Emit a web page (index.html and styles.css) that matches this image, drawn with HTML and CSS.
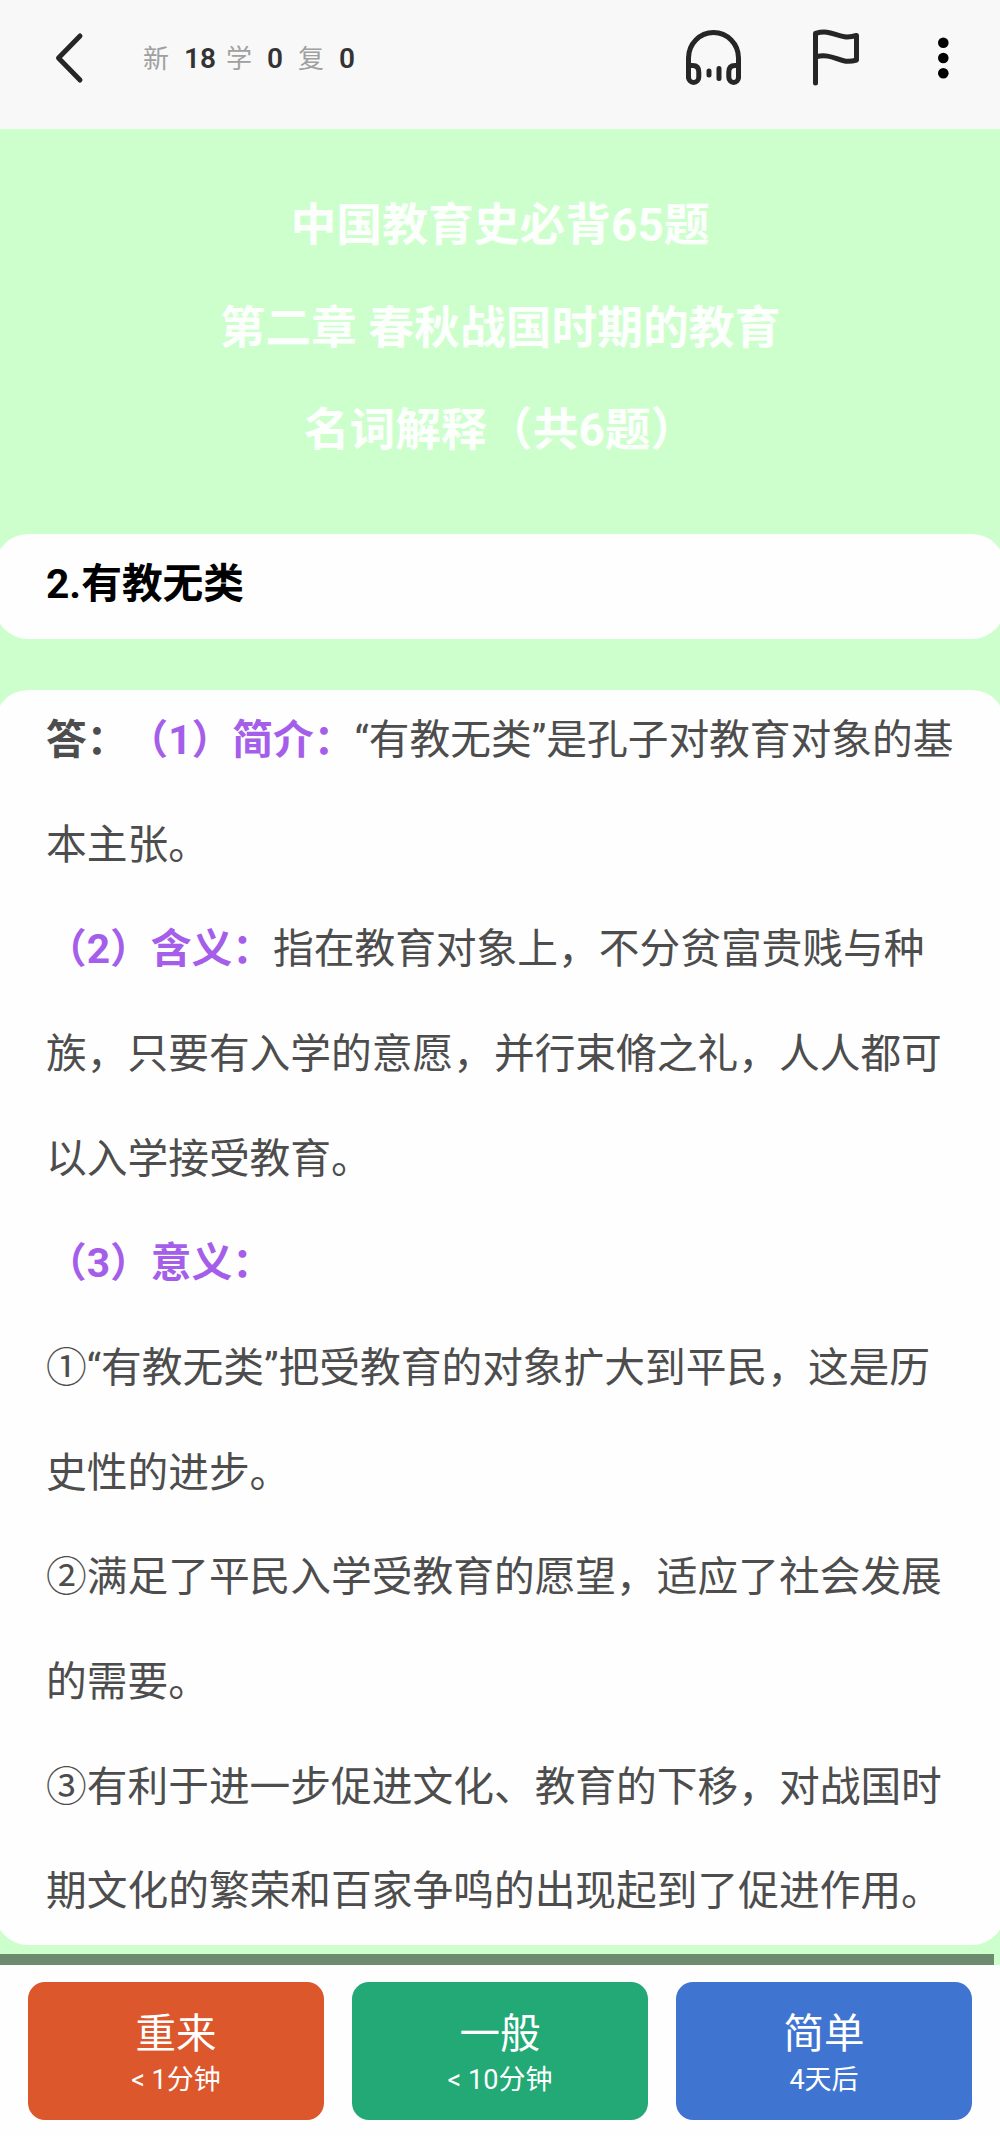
FILE: index.html
```
<!DOCTYPE html>
<html lang="zh-CN">
<head>
    <meta charset="UTF-8">
    <meta name="viewport" content="width=device-width, initial-scale=1.0">
    <title>中国教育史必背65题</title>
    <link rel="stylesheet" href="styles.css">
</head>
<body>
    <header class="topbar">
        <svg class="icon-back" width="32" height="56" viewBox="0 0 32 56">
            <path d="M26 6 L4.500 28 L26 50"/>
        </svg>
        <div class="counts">
            <span class="label">新</span><b>18</b>
            <span class="label">学</span><b>0</b>
            <span class="label">复</span><b>0</b>
        </div>
        <div class="actions">
            <svg class="icon-listen" width="60" height="60" viewBox="0 0 60 60">
                <path d="M5.500 49 V30 A25 25.5 0 0 1 55.500 30 V49"/>
                <path d="M5.500 37.5 H9.500 Q15.800 37.5 15.800 44 V49 A5.15 5.5 0 0 1 5.500 49 Z"/>
                <path d="M55.500 37.5 H52 Q45.800 37.5 45.800 44 V49 A4.850 5.5 0 0 0 55.500 49 Z"/>
                <path d="M26 43 V47 M36 40.500 V50.500"/>
            </svg>
            <svg class="icon-flag" width="60" height="60" viewBox="0 0 60 60">
                <path d="M8.500 55 V5.500 C26.500 0 30.500 13 49.500 7.500 V32 C32.500 37.500 27.500 24 8.500 29"/>
            </svg>
            <svg class="icon-more" width="20" height="60" viewBox="0 0 20 60">
                <circle cx="10.300" cy="14.700" r="5.300"/>
                <circle cx="10.300" cy="30" r="5.300"/>
                <circle cx="10.300" cy="45.300" r="5.300"/>
            </svg>
        </div>
    </header>

    <main class="deck">
        <div class="chapter">
            <p>中国教育史必背65题</p>
            <p>第二章 春秋战国时期的教育</p>
            <p>名词解释（共6题）</p>
        </div>

        <section class="card question">2.有教无类</section>

        <section class="card answer">
            <p><b>答：</b><b class="key">（1）简介：</b>“有教无类”是孔子对教育对象的基<br>本主张。</p>
            <p><b class="key">（2）含义：</b>指在教育对象上，不分贫富贵贱与种<br>族，只要有入学的意愿，并行束脩之礼，人人都可<br>以入学接受教育。</p>
            <p><b class="key">（3）意义：</b></p>
            <p>①“有教无类”把受教育的对象扩大到平民，这是历<br>史性的进步。</p>
            <p>②满足了平民入学受教育的愿望，适应了社会发展<br>的需要。</p>
            <p>③有利于进一步促进文化、教育的下移，对战国时<br>期文化的繁荣和百家争鸣的出现起到了促进作用。</p>
        </section>

        <div class="scrollbar"></div>
    </main>

    <footer class="buttons">
        <button class="btn again">重来<small>&lt; 1分钟</small></button>
        <button class="btn good">一般<small>&lt; 10分钟</small></button>
        <button class="btn easy">简单<small>4天后</small></button>
    </footer>
</body>
</html>
```
FILE: styles.css
```
* {
    box-sizing: border-box;
}
body {
    margin: 0;
    height: 2136px;
    display: flex;
    flex-direction: column;
    overflow: hidden;
    background: #fefefe;
    font-family: Roboto, "Noto Sans CJK SC", sans-serif;
    text-spacing-trim: space-all;
}
p {
    margin: 0;
}
svg {
    display: block;
    fill: none;
    stroke: #262626;
    stroke-width: 5;
    stroke-linecap: round;
    stroke-linejoin: round;
}

/* top bar */
.topbar {
    height: 129px;
    padding: 0 47px 14px 54px;
    display: flex;
    align-items: center;
    background: #f8f8f8;
}
.counts {
    display: flex;
    align-items: baseline;
    margin-left: 57px;
    padding-top: 2px;
    font-size: 28px;
    line-height: 40px;
    color: #333;
}
.counts b {
    width: 32px;
    margin: 0 10px 0 15px;
    font-weight: 600;
}
.counts b + .label ~ b {
    width: 16px;
    margin-right: 15px;
}
.label {
    font-size: 26px;
    color: #a0a0a0;
}
.actions {
    margin-left: auto;
    display: flex;
}
.icon-flag {
    margin-left: 64px;
}
.icon-more {
    margin-left: 66px;
    fill: #000;
    stroke: none;
}

/* card content */
.deck {
    height: 1836px;
    background: #cfc;
    display: flex;
    flex-direction: column;
}
.chapter {
    padding-top: 46px;
    height: 405px;
    text-align: center;
    font-size: 45.800px;
    font-weight: 700;
    line-height: 102.500px;
    color: #fcfffc;
}
.card {
    margin: 0 -5px;
    padding: 0 51px;
    border-radius: 33px;
    background: #fefefe;
    font-size: 40.720px;
    white-space: nowrap;
}
.question {
    height: 105px;
    line-height: 101px;
    font-weight: 700;
    color: #000;
}
.answer {
    margin-top: 51px;
    height: 1255px;
    line-height: 104.650px;
    color: #4d4d4d;
}
/* the first line sits a little closer to the card edge */
.answer p:first-child {
    margin-top: -2px;
}
.key {
    color: #a55eea;
}
.scrollbar {
    width: 994px;
    height: 11px;
    margin-top: 9px;
    background: #6f8b6f;
}

/* answer buttons */
.buttons {
    display: flex;
    gap: 28px;
    padding: 17px 28px 16px;
}
.btn {
    flex: 1;
    height: 138px;
    padding: 6px 0 0;
    border: none;
    border-radius: 17px;
    display: flex;
    flex-direction: column;
    align-items: center;
    justify-content: center;
    font-family: inherit;
    font-size: 40.500px;
    line-height: 52px;
    color: #fff;
}
.btn small {
    font-size: 27px;
    line-height: 40px;
}
.again {
    background: #dc572c;
}
.good {
    background: #22a976;
}
.easy {
    background: #3f75d1;
}
```
